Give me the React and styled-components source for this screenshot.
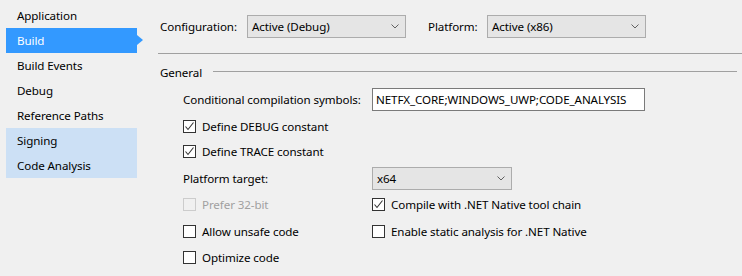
import React from "react";
import styled, { createGlobalStyle } from "styled-components";

const GlobalStyle = createGlobalStyle`
  html, body {
    margin: 0;
    padding: 0;
    background: #f0f0f0;
  }
  * {
    box-sizing: border-box;
  }
`;

const Page = styled.div`
  display: flex;
  width: 742px;
  height: 276px;
  overflow: hidden;
  background: #f0f0f0;
  color: #000;
  font-family: "Noto Sans", "Open Sans", sans-serif;
  font-size: 11.6px;
  letter-spacing: -0.1px;
`;

const Sidebar = styled.nav`
  width: 158px;
  flex: none;
  padding: 3px 0 0 6px;
  display: flex;
  flex-direction: column;
`;

const NavItem = styled.div`
  position: relative;
  width: 131px;
  height: 25px;
  line-height: 25px;
  padding-left: 11px;
  white-space: nowrap;
  color: ${(p) => (p.$active ? "#fff" : "#000")};
  background: ${(p) =>
    p.$active ? "#3399ff" : p.$muted ? "#cce0f5" : "transparent"};

  ${(p) =>
    p.$active &&
    `
    &::after {
      content: "";
      position: absolute;
      top: 7px;
      right: -6px;
      border-top: 5.5px solid transparent;
      border-bottom: 5.5px solid transparent;
      border-left: 6px solid #3399ff;
    }
  `}
`;

const Main = styled.main`
  flex: 1;
  display: flex;
  flex-direction: column;
`;

const Toolbar = styled.div`
  display: flex;
  align-items: center;
  height: 23px;
  margin-top: 15px;
  padding-left: 2px;
`;

const ToolLabel = styled.span`
  width: ${(p) => p.$width}px;
  flex: none;
  white-space: nowrap;
`;

const Select = styled.div`
  display: flex;
  align-items: center;
  justify-content: space-between;
  width: ${(p) => p.$width}px;
  height: 23px;
  margin-right: ${(p) => p.$gap || 0}px;
  padding: 0 6px 0 4px;
  background: #e5e5e5;
  border: 1px solid #acacac;
  white-space: nowrap;

  svg {
    flex: none;
  }
`;

const Separator = styled.div`
  margin-top: 15px;
  height: 1px;
  background: #a0a0a0;
`;

const GroupHeader = styled.div`
  display: flex;
  align-items: center;
  height: 16px;
  margin-top: 10px;
  padding-left: 2px;
  padding-right: 5px;

  &::after {
    content: "";
    flex: 1;
    height: 1px;
    margin: 0 0 1px 11px;
    background: #a0a0a0;
  }
`;

const Form = styled.div`
  display: grid;
  grid-template-columns: 189px auto;
  grid-template-rows: 30px 25px 24px 29px 27px 26px 16px;
  align-items: start;
  margin: 8px 0 0 25px;
`;

const FieldLabel = styled.span`
  line-height: 23px;
  white-space: nowrap;
`;

const TextBox = styled.div`
  width: 273px;
  height: 23px;
  padding: 0 3px;
  line-height: 21px;
  background: #fff;
  border: 1px solid #7a7a7a;
  white-space: nowrap;
`;

const CheckRow = styled.label`
  display: flex;
  align-items: center;
  height: 16px;
  white-space: nowrap;
  grid-column: ${(p) => (p.$span ? "1 / span 2" : "auto")};
  color: ${(p) => (p.$disabled ? "#a0a0a0" : "#000")};
`;

const Box = styled.span`
  display: inline-flex;
  align-items: center;
  justify-content: center;
  width: 13px;
  height: 13px;
  flex: none;
  margin-right: 6px;
  background: ${(p) => (p.$disabled ? "#f0f0f0" : "#fff")};
  border: 1px solid ${(p) => (p.$disabled ? "#cccccc" : "#333333")};
`;

const Chevron = () => (
  <svg width="8" height="5" viewBox="0 0 8 5">
    <polyline points="0.5,0.5 4,4 7.5,0.5" fill="none" stroke="#606060" strokeWidth="1" />
  </svg>
);

const Check = ({ checked, disabled, children, span }) => (
  <CheckRow $disabled={disabled} $span={span}>
    <Box $disabled={disabled}>
      {checked && (
        <svg width="11" height="11" viewBox="0 0 11 11">
          <polyline points="1.5,5.5 4,8.5 9.5,1.5" fill="none" stroke="#333" strokeWidth="1.1" />
        </svg>
      )}
    </Box>
    {children}
  </CheckRow>
);

const navItems = [
  { label: "Application" },
  { label: "Build", active: true },
  { label: "Build Events" },
  { label: "Debug" },
  { label: "Reference Paths" },
  { label: "Signing", muted: true },
  { label: "Code Analysis", muted: true },
];

export default function App() {
  return (
    <>
      <GlobalStyle />
      <Page>
        <Sidebar>
          {navItems.map((item) => (
            <NavItem key={item.label} $active={item.active} $muted={item.muted}>
              {item.label}
            </NavItem>
          ))}
        </Sidebar>
        <Main>
          <Toolbar>
            <ToolLabel $width={87}>Configuration:</ToolLabel>
            <Select $width={159} $gap={22}>
              Active (Debug)
              <Chevron />
            </Select>
            <ToolLabel $width={59}>Platform:</ToolLabel>
            <Select $width={159}>
              Active (x86)
              <Chevron />
            </Select>
          </Toolbar>
          <Separator />
          <GroupHeader>General</GroupHeader>
          <Form>
            <FieldLabel>Conditional compilation symbols:</FieldLabel>
            <TextBox>NETFX_CORE;WINDOWS_UWP;CODE_ANALYSIS</TextBox>
            <Check checked span>Define DEBUG constant</Check>
            <Check checked span>Define TRACE constant</Check>
            <FieldLabel>Platform target:</FieldLabel>
            <Select $width={140}>
              x64
              <Chevron />
            </Select>
            <Check disabled>Prefer 32-bit</Check>
            <Check checked>Compile with .NET Native tool chain</Check>
            <Check>Allow unsafe code</Check>
            <Check>Enable static analysis for .NET Native</Check>
            <Check>Optimize code</Check>
          </Form>
        </Main>
      </Page>
    </>
  );
}
